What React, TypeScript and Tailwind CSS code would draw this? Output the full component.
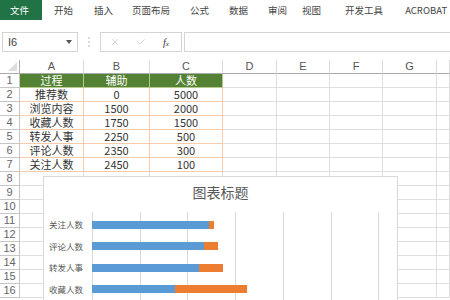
import { X, Check } from 'lucide-react';

const font = { fontFamily: '"Noto Sans CJK SC", "Noto Sans", sans-serif' };
const latin = '[font-family:"Liberation_Sans",sans-serif]';

const tabs = [
    { label: '开始', cls: 'ml-[12px]' },
    { label: '插入', cls: 'ml-[21px]' },
    { label: '页面布局', cls: 'ml-[19px]' },
    { label: '公式', cls: 'ml-[20px]' },
    { label: '数据', cls: 'ml-[20px]' },
    { label: '审阅', cls: 'ml-[20px]' },
    { label: '视图', cls: 'ml-[15px]' },
    { label: '开发工具', cls: 'ml-[24px]' },
    { label: 'ACROBAT', cls: 'ml-[22px]' },
];

const cols = ['A', 'B', 'C', 'D', 'E', 'F', 'G', ''];

const table: string[][] = [
    ['过程', '辅助', '人数'],
    ['推荐数', '0', '5000'],
    ['浏览内容', '1500', '2000'],
    ['收藏人数', '1750', '1500'],
    ['转发人事', '2250', '500'],
    ['评论人数', '2350', '300'],
    ['关注人数', '2450', '100'],
];

// top of chart first (Excel draws categories bottom-up)
const bars = [
    { name: '关注人数', base: 2450, value: 100 },
    { name: '评论人数', base: 2350, value: 300 },
    { name: '转发人事', base: 2250, value: 500 },
    { name: '收藏人数', base: 1750, value: 1500 },
];

const SCALE = 47.7 / 1000;

function cellClass(row: number, col: number) {
    // col: 0 = row header, 1..8 = A..H
    if (col === 0) return `border-r border-b border-[#c6c6c6] text-[#666] justify-center ${latin}`;
    const inTable = row >= 1 && row <= 7 && col <= 3;
    if (row === 1 && col <= 3) return 'bg-[#548235] text-white border-r border-b border-[#b5c98a] justify-center';
    if (inTable) return 'border-r border-b border-[#f8cbad] text-[#333] justify-center';
    return 'border-r border-b border-[#dedede]';
}

function Sheet() {
    const rows = Array.from({ length: 16 }, (_, i) => i + 1);
    return (
        <div className="relative">
            <div className="grid grid-cols-[20px_64px_66px_73px_54px_53px_53px_54px_1fr]">
                <div className="h-[14px] border-r border-b border-[#ababab] flex items-end justify-end pr-[2px] pb-[2px]">
                    <div className="w-0 h-0 border-l-[9px] border-l-transparent border-b-[9px] border-b-[#dcdcdc]" />
                </div>
                {cols.map((c, i) => (
                    <div
                        key={i}
                        className={`h-[14px] border-r border-b border-r-[#dcdcdc] border-b-[#ababab] flex items-center justify-center text-[11px] text-[#555] leading-none ${latin}`}
                    >
                        {c}
                    </div>
                ))}
                {rows.map(r => (
                    <div key={r} className="contents">
                        {Array.from({ length: 9 }, (_, c) => (
                            <div
                                key={c}
                                className={`h-[14px] flex items-center text-[11px] leading-none ${cellClass(r, c)}`}
                            >
                                {c === 0 ? r : r <= 7 && c <= 3 ? table[r - 1][c - 1] : ''}
                            </div>
                        ))}
                    </div>
                ))}
            </div>

            <div className="absolute left-[43px] top-[116px] w-[355px] h-[130px] overflow-hidden bg-white border border-[#d9d9d9]">
                <div className="pt-[5px] h-[25px] text-center text-[14px] leading-[20px] text-[#595959]">图表标题</div>
                <div className="flex mt-[10px]">
                    <div className="w-[48px] pt-[2px] flex flex-col">
                        {bars.map(b => (
                            <div key={b.name} className="h-[21.5px] flex items-center justify-end pr-[9px] text-[8.5px] text-[#595959] whitespace-nowrap">
                                {b.name}
                            </div>
                        ))}
                    </div>
                    <div className="relative w-[288px] h-[100px] pt-[2px]">
                        {Array.from({ length: 7 }, (_, i) => (
                            <div
                                key={i}
                                className="absolute top-0 bottom-0 w-px bg-[#d9d9d9]"
                                style={{ left: Math.round(i * 47.7) }}
                            />
                        ))}
                        {bars.map(b => (
                            <div key={b.name} className="relative h-[21.5px] flex items-center">
                                <div className="h-[8px] bg-[#5b9bd5]" style={{ width: b.base * SCALE }} />
                                <div className="h-[8px] bg-[#ed7d31]" style={{ width: b.value * SCALE }} />
                            </div>
                        ))}
                    </div>
                </div>
            </div>
        </div>
    );
}

export default function App() {
    return (
        <div className="w-[450px] h-[300px] overflow-hidden bg-white" style={font}>
            <div className="h-[20px] flex items-center text-[9.5px] text-[#444] whitespace-nowrap">
                <div className="h-full w-[42px] bg-[#217346] text-white flex items-center pl-[10px]">文件</div>
                {tabs.map(t => (
                    <span key={t.label} className={t.cls}>{t.label}</span>
                ))}
            </div>

            <div className="h-[40px] pt-[12px]">
                <div className="h-[20px] flex items-stretch">
                    <div className="ml-[2px] w-[76px] border border-[#d4d4d4] flex items-center justify-between pl-[5px] pr-[5px]">
                        <span className={`text-[11px] text-[#444] ${latin}`}>I6</span>
                        <svg width="6" height="4" viewBox="0 0 6 4"><path d="M0 0h6L3 4z" fill="#555" /></svg>
                    </div>
                    <div className="w-[22px] flex items-center justify-center">
                        <svg width="2" height="10" viewBox="0 0 2 10">
                            <circle cx="1" cy="1" r="0.8" fill="#aaa" />
                            <circle cx="1" cy="5" r="0.8" fill="#aaa" />
                            <circle cx="1" cy="9" r="0.8" fill="#aaa" />
                        </svg>
                    </div>
                    <div className="w-[82px] border border-[#d4d4d4] flex items-center pl-[9px]">
                        <X size={10} strokeWidth={1.5} color="#b5b5b5" />
                        <Check size={10} strokeWidth={1.5} color="#b5b5b5" className="ml-[16px]" />
                        <span className="ml-[17px] text-[10px] italic text-[#333]" style={{ fontFamily: '"Liberation Serif", serif' }}>
                            f<span className="text-[7px]">x</span>
                        </span>
                    </div>
                    <div className="ml-[2px] flex-1 border border-r-0 border-[#d4d4d4]" />
                </div>
            </div>

            <Sheet />
        </div>
    );
}
